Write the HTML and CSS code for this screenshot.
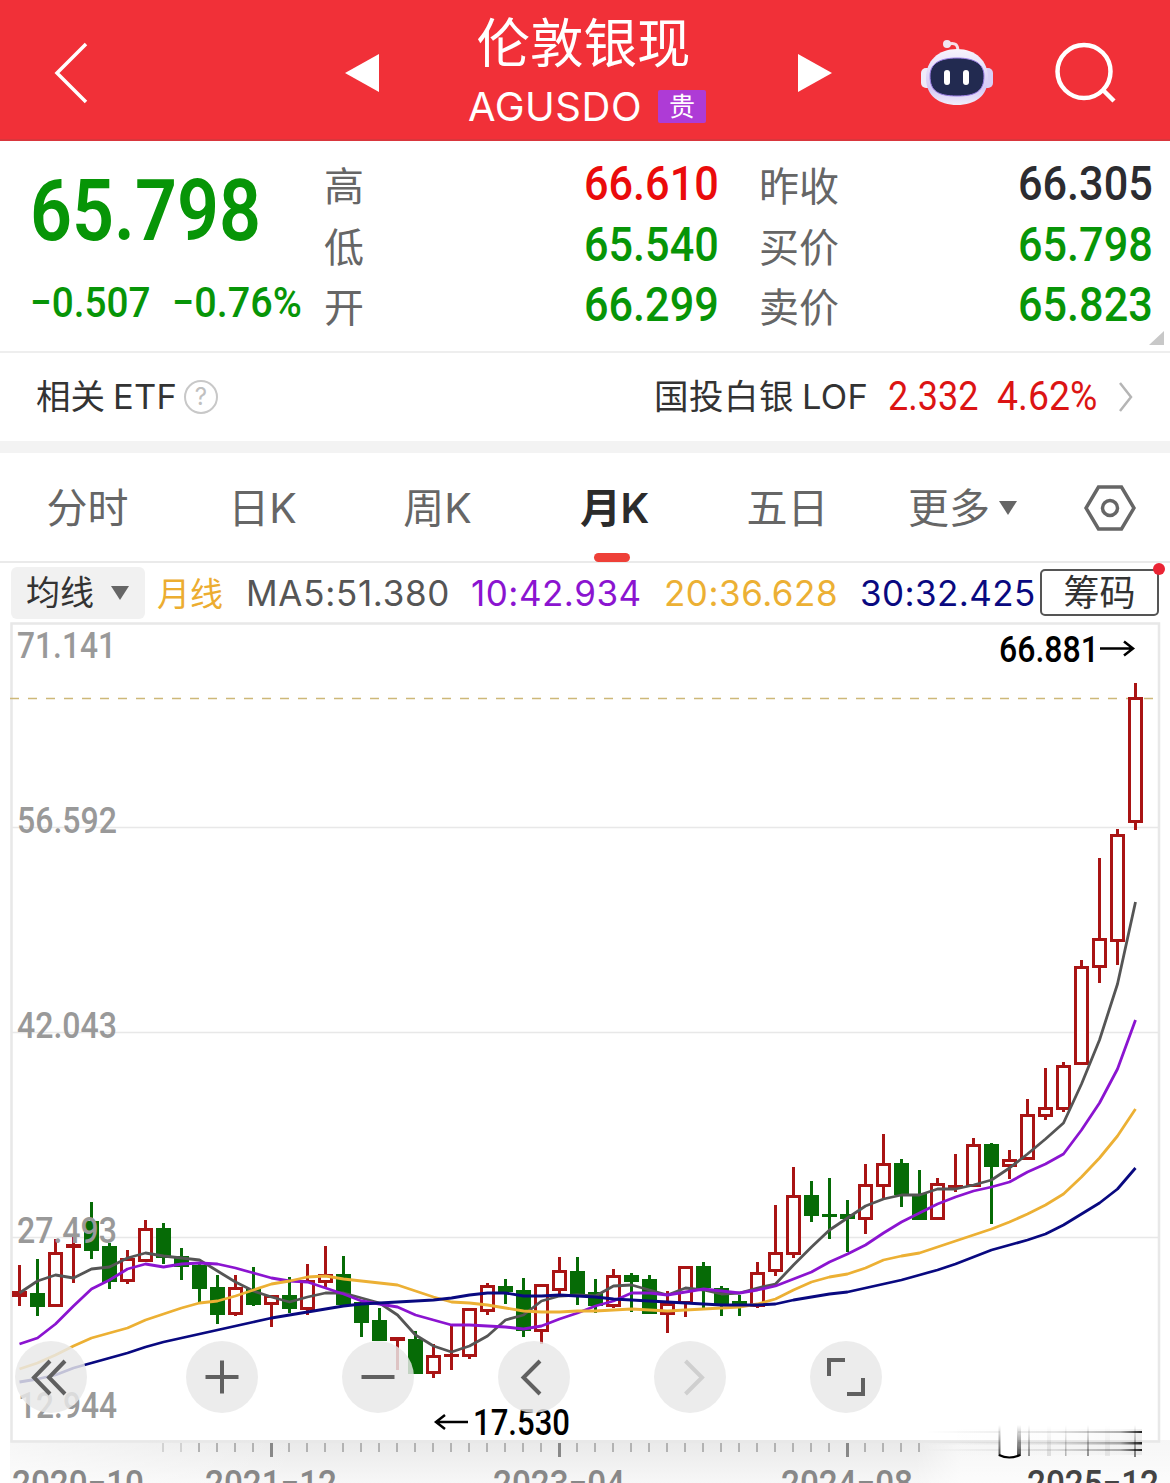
FILE: index.html
```html
<!DOCTYPE html>
<html lang="zh-CN">
<head>
    <meta charset="UTF-8">
    <meta name="viewport" content="width=device-width, initial-scale=1.0">
    <title>伦敦银现 AGUSDO</title>
    <link rel="stylesheet" href="styles.css">
</head>
<body>
    <header class="header">
        <svg class="back" width="36" height="62" viewBox="0 0 36 62"><path d="M32 2 3 31l29 29" fill="none" stroke="#fff" stroke-width="3.5"/></svg>
        <svg class="prev" width="34" height="38" viewBox="0 0 34 38"><path d="M34 0v38L0 19z" fill="#fff"/></svg>
        <div class="title">
            <h1>伦敦银现</h1>
            <div class="code"><span>AGUSDO</span><span class="tag">贵</span></div>
        </div>
        <svg class="next" width="34" height="38" viewBox="0 0 34 38"><path d="M0 0v38l34-19z" fill="#fff"/></svg>
        <svg class="robot" width="74" height="68" viewBox="0 0 74 68">
            <defs>
                <linearGradient id="head" x1="0" y1="0" x2="0" y2="1">
                    <stop offset="0" stop-color="#f7f4fd"/>
                    <stop offset=".7" stop-color="#d5c9f5"/>
                    <stop offset="1" stop-color="#f0edfa"/>
                </linearGradient>
            </defs>
            <path d="M28 5c8-2 10 1 10 8" fill="none" stroke="#f7dfe8" stroke-width="3"/>
            <circle cx="27" cy="5" r="4" fill="#f1e6f2"/>
            <rect x="1" y="29" width="12" height="20" rx="5" fill="#efebfa"/>
            <rect x="61" y="29" width="12" height="20" rx="5" fill="#d9cff5"/>
            <path d="M37 10c19 0 31 12 31 29 0 18-13 27-31 27S6 57 6 39c0-17 12-29 31-29z" fill="url(#head)"/>
            <path d="M37 19c18 0 27 6 27 18 0 15-8 20-27 20S10 52 10 37c0-12 9-18 27-18z" fill="#222a50" stroke="#9c7fe6" stroke-width="1"/>
            <rect x="24" y="31" width="6" height="15" rx="3" fill="#fff"/>
            <rect x="43" y="31" width="6" height="15" rx="3" fill="#fff"/>
        </svg>
        <svg class="search" width="62" height="62" viewBox="0 0 62 62"><g fill="none" stroke="#fff" stroke-width="4.5"><circle cx="29" cy="29.500" r="26.500"/><path d="M48 48 59 59"/></g></svg>
    </header>

    <section class="quote">
        <div class="last">
            <div class="price"><span class="num">65.798</span></div>
            <div class="change"><span class="num">−0.507</span><span class="num">−0.76%</span></div>
        </div>
        <dl class="stats">
            <div><dt>高</dt><dd class="num up">66.610</dd></div>
            <div><dt>低</dt><dd class="num">65.540</dd></div>
            <div><dt>开</dt><dd class="num">66.299</dd></div>
        </dl>
        <dl class="stats">
            <div><dt>昨收</dt><dd class="num flat">66.305</dd></div>
            <div><dt>买价</dt><dd class="num">65.798</dd></div>
            <div><dt>卖价</dt><dd class="num">65.823</dd></div>
        </dl>
        <span class="corner"></span>
    </section>

    <section class="etf">
        <span class="etf-label">相关<span class="latin">ETF</span></span>
        <span class="help">?</span>
        <span class="etf-name">国投白银<span class="latin">LOF</span></span>
        <span class="num etf-price">2.332</span>
        <span class="num etf-rate">4.62%</span>
        <svg width="16" height="30" viewBox="0 0 16 30"><path d="M2 1l11 14L2 29" fill="none" stroke="#b5b5b5" stroke-width="2.500"/></svg>
    </section>

    <nav class="tabs">
        <span>分时</span>
        <span>日K</span>
        <span>周K</span>
        <span class="active">月K</span>
        <span>五日</span>
        <span class="more">更多<i class="caret"></i></span>
        <svg width="52" height="46" viewBox="0 0 52 46"><g fill="none" stroke="#666" stroke-width="3.500"><path d="M14.500 2h23L50 23 37.500 44h-23L2 23z"/><circle cx="26" cy="23" r="7.500"/></g></svg>
    </nav>

    <div class="legend">
        <span class="ma-select">均线<i class="caret"></i></span>
        <span class="cycle">月线</span>
        <span class="ma5">MA5:51.380</span>
        <span class="ma10">10:42.934</span>
        <span class="ma20">20:36.628</span>
        <span class="ma30">30:32.425</span>
        <span class="chips">筹码</span>
    </div>

    <main class="chart">
        <svg id="kline" width="1170" height="861" viewBox="0 622 1170 861">
            <defs>
                <linearGradient id="ruler" x1="0" y1="0" x2="0" y2="1">
                    <stop offset="0" stop-color="#e9e9e9"/>
                    <stop offset="1" stop-color="#f7f7f7"/>
                </linearGradient>
                <linearGradient id="fade" x1="0" y1="0" x2="1" y2="0">
                    <stop offset="0" stop-color="#fff"/>
                    <stop offset=".25" stop-color="#fff" stop-opacity="0"/>
                    <stop offset=".78" stop-color="#fff" stop-opacity="0"/>
                    <stop offset=".82" stop-color="#fff"/>
                </linearGradient>
                <linearGradient id="streak" gradientUnits="userSpaceOnUse" x1="925" y1="0" x2="1142" y2="0">
                    <stop offset="0" stop-color="#000" stop-opacity="0"/>
                    <stop offset=".6" stop-color="#000" stop-opacity=".1"/>
                    <stop offset=".9" stop-color="#000" stop-opacity=".3"/>
                    <stop offset="1" stop-color="#000" stop-opacity=".85"/>
                </linearGradient>
                <linearGradient id="drop" gradientUnits="userSpaceOnUse" x1="0" y1="1425" x2="0" y2="1456">
                    <stop offset="0" stop-color="#000" stop-opacity="0"/>
                    <stop offset="1" stop-color="#000" stop-opacity=".7"/>
                </linearGradient>
            </defs>
            <rect x="10" y="1440" width="1160" height="43" fill="url(#ruler)"/>
            <rect x="10" y="1440" width="1160" height="43" fill="url(#fade)" opacity=".6"/>
            <g stroke="#e8e8e8" stroke-width="1.500">
                <path d="M12 827.500h1146M12 1032.500h1146M12 1237.500h1146"/>
                <path d="M11.500 623.500h1147.500v818h-1147.500z" fill="none" stroke-width="2.500"/>
            </g>
            <g id="ticks"></g>
            <path d="M10 698.500h1145" stroke="#cdb878" stroke-width="1.500" stroke-dasharray="9 9"/>
            <g id="candles"></g>
            <g id="lines" fill="none" stroke-width="2.800" stroke-linejoin="round"></g>
            <g class="axis">
                <text x="17" y="658" textLength="99" lengthAdjust="spacingAndGlyphs">71.141</text>
                <text x="17" y="833" textLength="100" lengthAdjust="spacingAndGlyphs">56.592</text>
                <text x="17" y="1038" textLength="100" lengthAdjust="spacingAndGlyphs">42.043</text>
                <text x="17" y="1243" textLength="100" lengthAdjust="spacingAndGlyphs">27.493</text>
                <text x="18" y="1418" textLength="99" lengthAdjust="spacingAndGlyphs">12.944</text>
            </g>
            <g class="marks">
                <text x="999" y="661.500" textLength="100" lengthAdjust="spacingAndGlyphs">66.881</text>
                <text x="473" y="1435" textLength="97" lengthAdjust="spacingAndGlyphs">17.530</text>
                <path d="M1100 648.500h33m-9-7 9 7-9 7M468 1422h-32m9-7-9 7 9 7" fill="none" stroke="#000" stroke-width="2.500"/>
            </g>
            <g class="dates">
                <text x="12" y="1496" textLength="132" lengthAdjust="spacingAndGlyphs">2020−10</text>
                <text x="205" y="1496" textLength="132" lengthAdjust="spacingAndGlyphs">2021−12</text>
                <text x="493" y="1496" textLength="132" lengthAdjust="spacingAndGlyphs">2023−04</text>
                <text x="781" y="1496" textLength="132" lengthAdjust="spacingAndGlyphs">2024−08</text>
                <text class="current" x="1027" y="1496" textLength="132" lengthAdjust="spacingAndGlyphs">2025−12</text>
            </g>
            <!-- range handle -->
            <rect x="925" y="1429" width="217" height="26" fill="url(#streak)" opacity=".08"/>
            <g fill="url(#streak)">
                <rect x="925" y="1431" width="217" height="2"/>
                <rect x="925" y="1442" width="217" height="2.500"/>
                <rect x="925" y="1449" width="217" height="2"/>
            </g>
            <rect x="1000" y="1425" width="18" height="31" fill="#fff"/>
            <g fill="url(#drop)">
                <rect x="998.500" y="1425" width="2" height="31"/>
                <rect x="1017" y="1425" width="4" height="31"/>
                <rect x="1028" y="1425" width="2" height="31" opacity=".6"/>
                <rect x="1047" y="1425" width="4" height="31" opacity=".15"/>
                <rect x="1065" y="1425" width="1.500" height="31" opacity=".4"/>
                <rect x="1087" y="1425" width="2" height="31" opacity=".6"/>
                <rect x="1105" y="1425" width="5" height="31" opacity=".1"/>
                <rect x="1134" y="1425" width="2" height="32" opacity=".7"/>
            </g>
            <path d="M999 1455q10 5 21 0" fill="none" stroke="#000" stroke-width="2"/>
        </svg>
        <div class="tools">
            <span><svg viewBox="0 0 72 72"><path d="M35 20 19 36.500 35 53M50 20 34 36.500 50 53"/></svg></span>
            <span><svg viewBox="0 0 72 72"><path d="M36 19.500v33M19.500 36h33"/></svg></span>
            <span><svg viewBox="0 0 72 72"><path d="M19.500 36h33"/></svg></span>
            <span><svg viewBox="0 0 72 72"><path d="M42 20 25.500 36.500 42 53"/></svg></span>
            <span class="off"><svg viewBox="0 0 72 72"><path d="M31.500 20 48 36.500 31.500 53"/></svg></span>
            <span><svg viewBox="0 0 72 72"><path d="M35 19H19v16M53 37v16H37"/></svg></span>
        </div>
    </main>

    <script>
        // [涨跌, 最高, 实体上沿, 实体下沿, 最低]
        const candles = [
            ['r',1265,1291,1297,1306], ['g',1259,1293,1307,1316], ['r',1239,1252,1307,1307], ['r',1236,1244,1248,1283],
            ['g',1202,1221,1251,1259], ['g',1243,1246,1282,1289], ['r',1250,1258,1282,1284], ['r',1220,1228,1262,1262],
            ['g',1223,1228,1258,1264], ['g',1248,1256,1267,1280], ['g',1262,1265,1289,1303], ['g',1275,1287,1315,1324],
            ['r',1275,1287,1315,1316], ['g',1267,1289,1305,1306], ['r',1295,1295,1305,1327], ['g',1277,1295,1309,1313],
            ['r',1264,1280,1310,1315], ['r',1246,1274,1283,1287], ['g',1256,1274,1305,1305], ['g',1300,1302,1323,1337],
            ['g',1308,1320,1341,1341], ['r',1337,1337,1341,1370], ['g',1331,1339,1374,1374], ['r',1344,1355,1374,1378],
            ['r',1325,1354,1357,1370], ['r',1308,1308,1357,1359], ['r',1283,1285,1312,1315], ['g',1279,1286,1292,1304],
            ['g',1278,1290,1331,1337], ['r',1284,1284,1332,1344], ['r',1257,1270,1291,1294], ['g',1257,1271,1295,1305],
            ['g',1279,1292,1306,1313], ['r',1269,1275,1307,1308], ['g',1273,1275,1282,1312], ['g',1275,1279,1314,1314],
            ['r',1291,1303,1315,1333], ['r',1266,1266,1304,1317], ['g',1262,1266,1288,1308], ['g',1286,1288,1305,1316],
            ['g',1295,1301,1306,1316], ['r',1262,1272,1307,1308], ['r',1205,1252,1272,1276], ['r',1167,1195,1255,1258],
            ['g',1181,1195,1216,1222], ['g',1178,1214,1217,1239], ['g',1200,1214,1219,1252], ['r',1164,1184,1220,1234],
            ['r',1134,1163,1187,1198], ['g',1159,1163,1195,1207], ['g',1170,1194,1220,1220], ['r',1178,1183,1220,1220],
            ['r',1154,1185,1188,1192], ['r',1138,1144,1187,1187], ['g',1143,1144,1167,1224], ['r',1150,1159,1167,1179],
            ['r',1099,1114,1160,1160], ['r',1068,1107,1117,1120], ['r',1062,1065,1110,1112], ['r',960,966,1065,1065],
            ['r',858,938,968,983], ['r',829,834,942,965], ['r',683,697,823,830]
        ];
        const averages = {
            '#555': [1293,1281,1275,1278,1269,1267,1258,1253,1256,1258,1260,1271,1282,1291,1297,1302,1297,1293,1293,1298,1303,1315,1335,1346,1352,1346,1336,1320,1315,1301,1296,1295,1296,1286,1285,1290,1295,1288,1290,1294,1293,1288,1284,1265,1247,1230,1218,1206,1199,1195,1195,1189,1189,1185,1180,1168,1154,1139,1123,1084,1040,984,902],
            '#8b14d0': [1344,1338,1324,1306,1289,1280,1269,1264,1267,1264,1263,1264,1268,1273,1278,1281,1282,1288,1294,1301,1304,1307,1315,1320,1325,1325,1326,1327,1329,1326,1319,1313,1306,1301,1293,1293,1295,1292,1289,1291,1293,1290,1286,1279,1272,1262,1254,1245,1233,1222,1213,1204,1197,1191,1187,1182,1172,1164,1154,1130,1103,1069,1020],
            '#ecb034': [1369,1363,1355,1346,1338,1333,1328,1320,1314,1308,1303,1301,1296,1290,1284,1281,1277,1276,1279,1281,1283,1285,1291,1297,1302,1303,1305,1308,1311,1312,1312,1311,1311,1310,1309,1310,1311,1310,1309,1308,1307,1304,1299,1290,1282,1277,1274,1268,1260,1256,1253,1247,1241,1235,1229,1222,1214,1205,1194,1177,1158,1136,1109],
            '#090980': [1382,1379,1375,1368,1363,1358,1353,1347,1342,1338,1334,1330,1326,1322,1318,1315,1312,1309,1306,1304,1303,1302,1301,1300,1298,1295,1293,1293,1296,1296,1295,1296,1297,1299,1300,1301,1302,1303,1304,1305,1305,1305,1304,1300,1297,1294,1292,1288,1284,1280,1275,1270,1264,1257,1250,1245,1240,1234,1225,1214,1203,1189,1168]
        };
        const x = i => 19.5 + i * 18;

        let bars = '';
        candles.forEach(([type, high, top, bottom, low], i) => {
            const color = type === 'r' ? '#a91414' : '#066b06';
            bars += `<path d="M${x(i)} ${high}V${top}M${x(i)} ${bottom}V${low}" stroke="${color}" stroke-width="3"/>`;
            if (type === 'r' && bottom - top > 5) {
                bars += `<rect x="${x(i) - 6}" y="${top + 1.5}" width="12" height="${bottom - top - 3}" fill="#fff" stroke="${color}" stroke-width="3"/>`;
            } else {
                bars += `<rect x="${x(i) - 7.5}" y="${top}" width="15" height="${bottom - top}" fill="${color}"/>`;
            }
        });
        document.getElementById('candles').innerHTML = bars;

        let lines = '';
        for (const color in averages) {
            const points = averages[color].map((y, i) => `${x(i)},${y}`).join(' ');
            lines += `<polyline points="${points}" stroke="${color}"/>`;
        }
        document.getElementById('lines').innerHTML = lines;

        let ticks = '';
        for (let i = 8; i <= 50; i++) {
            const major = (i - 14) % 16 === 0;
            ticks += `<rect x="${x(i) - 1.5}" y="1443" width="${major ? 3 : 2}" height="${major ? 14 : 9}" fill="${major ? '#888' : '#b3b3b3'}" opacity="${i < 10 ? 0.5 : 1}"/>`;
        }
        document.getElementById('ticks').innerHTML = ticks;
    </script>
</body>
</html>
```
FILE: styles.css
```css
* {
    box-sizing: border-box;
}

body {
    margin: 0;
    width: 1170px;
    height: 1483px;
    overflow: hidden;
    background: #fff;
    color: #333;
    font-family: Inter, 'Noto Sans CJK SC', sans-serif;
}

h1, dl, dd {
    margin: 0;
    font-weight: 400;
}

svg {
    display: block;
    flex: none;
}

.num {
    display: inline-block;
    font-family: Roboto, sans-serif;
    font-weight: 500;
    transform: scaleX(0.9);
    transform-origin: left center;
    white-space: nowrap;
}

.caret {
    width: 0;
    height: 0;
    border: 9.5px solid transparent;
    border-top: 14px solid #666;
    border-bottom: 0;
}

/* Header */
.header {
    display: flex;
    align-items: center;
    height: 141px;
    padding: 7px 0 0 54px;
    background: #f13038;
    border-bottom: 2px solid #d9363c;
    color: #fff;
}

.prev {
    margin-left: 255px;
}

.title {
    width: 419px;
    display: flex;
    flex-direction: column;
    align-items: center;
}

.title h1 {
    height: 67px;
    margin-left: -10px;
    font-size: 53.5px;
    line-height: 67px;
}

.code {
    display: flex;
    align-items: center;
    gap: 16px;
    height: 59px;
    margin-left: -3px;
    font-size: 40px;
    letter-spacing: 0.5px;
}

.tag {
    width: 48px;
    height: 33px;
    background: #ae3bd6;
    font-size: 26px;
    line-height: 34px;
    text-align: center;
    letter-spacing: 0;
    border-radius: 2px;
}

.robot {
    margin-left: 88px;
}

.search {
    margin-left: 61px;
}

/* Quote */
.quote {
    position: relative;
    display: grid;
    grid-template-columns: 324px 395px 394px;
    height: 212px;
    padding-top: 14px;
    border-bottom: 2px solid #eee;
    color: #079507;
}

.stats + .stats {
    width: 394px;
    margin-left: 40px;
}

.last {
    padding-left: 30px;
}

.price {
    height: 112px;
    font-size: 85px;
    line-height: 110px;
}

.price .num {
    font-weight: 600;
    transform: scaleX(0.865);
}

.change {
    display: flex;
    height: 70px;
    font-size: 43px;
    line-height: 71px;
}

.change .num {
    width: 142px;
}

.change .num + .num {
    transform: scaleX(0.92);
}

.stats > div {
    display: flex;
    justify-content: space-between;
    height: 60.5px;
    line-height: 58px;
    font-size: 48px;
}

.stats dt {
    font-size: 40px;
    line-height: 63px;
    color: #666;
}

.stats .num {
    transform-origin: right center;
}

.up {
    color: #ea0b0b;
}

.flat {
    color: #2c2c30;
}

.corner {
    position: absolute;
    right: 6px;
    bottom: 6px;
    border-left: 15px solid transparent;
    border-bottom: 14px solid #c8c8c8;
}

/* ETF */
.etf {
    display: flex;
    align-items: center;
    height: 100px;
    padding: 0 36px 0 36px;
    border-bottom: 12px solid #f3f3f3;
    font-size: 34.5px;
    line-height: 84px;
    white-space: nowrap;
}

.etf .latin {
    margin-left: 8px;
    letter-spacing: 0.2px;
}

.help {
    width: 34px;
    height: 34px;
    margin-left: 7px;
    border: 2.5px solid #c8c8c8;
    border-radius: 50%;
    color: #c0c0c0;
    font-size: 24px;
    line-height: 29px;
    text-align: center;
}

.etf-name {
    margin-left: auto;
    letter-spacing: 0.5px;
}

.etf .num {
    font-size: 40px;
    font-weight: 400;
    color: #dc1414;
}

.etf-price {
    width: 90px;
    margin-left: 20px;
}

.etf-rate {
    width: 100px;
    margin-left: 19px;
    margin-right: 21px;
}

.etf .etf-rate {
    transform: scaleX(0.935);
}

/* Tabs */
.tabs {
    display: grid;
    grid-template-columns: repeat(6, 175px) 120px;
    align-items: center;
    justify-items: center;
    height: 110px;
    border-bottom: 2px solid #eaeaea;
    color: #666;
    font-size: 41px;
    line-height: 110px;
}

.tabs .active {
    position: relative;
    left: 2px;
    color: #2b2b2b;
    font-weight: 600;
    letter-spacing: -0.5px;
}

.active::after {
    content: '';
    position: absolute;
    left: 14px;
    bottom: 1px;
    width: 36px;
    height: 9px;
    border-radius: 5px;
    background: #ee4038;
}

.more {
    display: flex;
    align-items: center;
    gap: 9px;
}

/* Legend */
.legend {
    display: grid;
    grid-template-columns: 146px 89px 225px 193px 196px 180px 119px;
    align-items: center;
    height: 59px;
    padding-left: 11px;
    font-size: 35px;
    letter-spacing: 0.5px;
    white-space: nowrap;
}

.ma-select {
    display: flex;
    align-items: center;
    gap: 17px;
    width: 134px;
    height: 52px;
    padding-left: 15px;
    border-radius: 6px;
    background: #f1f1f1;
    font-size: 34px;
    line-height: 50px;
    letter-spacing: 0;
}

.cycle {
    padding-bottom: 2px;
    color: #ecad30;
    font-size: 33px;
    letter-spacing: 0;
}

.ma5 {
    letter-spacing: 0.7px;
    color: #555;
}

.ma10 {
    color: #8b14d0;
}

.ma20 {
    color: #ecb034;
}

.ma30 {
    letter-spacing: 0.4px;
    color: #090980;
}

.chips {
    position: relative;
    height: 47px;
    border: 2px solid #555;
    border-radius: 5px;
    background: #fff;
    font-size: 36px;
    line-height: 45px;
    letter-spacing: 0;
    text-align: center;
}

.chips::after {
    content: '';
    position: absolute;
    right: -8px;
    top: -8px;
    width: 12px;
    height: 12px;
    border-radius: 50%;
    background: #ea2434;
}

/* Chart */
.chart {
    position: relative;
    height: 861px;
}

.chart text {
    font-family: Roboto, sans-serif;
    font-size: 37px;
    font-weight: 500;
}

.axis {
    fill: #999;
}

.marks {
    fill: #000;
}

.dates {
    fill: #888;
}

.dates .current {
    fill: #444;
}

.tools {
    position: absolute;
    left: 15px;
    top: 719px;
    display: flex;
    gap: 84px;
}

.tools span {
    width: 72px;
    height: 72px;
    border-radius: 50%;
    background: rgba(232, 232, 232, 0.83);
}

.tools span:first-child {
    margin-right: 15px;
}

.tools path {
    fill: none;
    stroke: #606060;
    stroke-width: 4;
}

.tools .off path {
    stroke: #cfcfcf;
}
```
